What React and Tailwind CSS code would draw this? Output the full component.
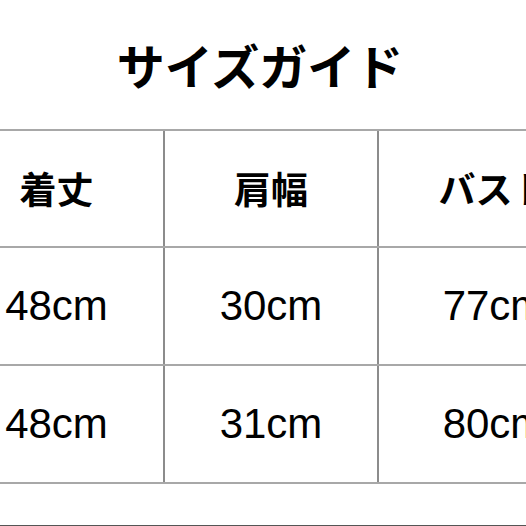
import React from "react";

const headers = ["着丈", "肩幅", "バスト"];
const rows = [
    ["48cm", "30cm", "77cm"],
    ["48cm", "31cm", "80cm"],
];
const colWidths = ["w-[215px]", "w-[214px]", "w-[230px]"];

const jp = { fontFamily: '"Noto Sans CJK JP", "Noto Sans", sans-serif' };
const num = { fontFamily: '"Liberation Sans", Arial, sans-serif' };

const Cell = ({ children, index, header }) => (
    <div
        className={`${colWidths[index]} shrink-0 flex items-center justify-center ${index < 2 ? "border-r-2 border-[#8c8c8c]" : ""}`}
    >
        {header ? (
            <span className="text-[37px] font-bold text-black leading-none" style={jp}>{children}</span>
        ) : (
            <span className="text-[42px] text-black leading-none" style={num}>{children}</span>
        )}
    </div>
);

const App = () => {
    return (
        <div className="w-[526px] h-[526px] bg-white overflow-hidden flex flex-col relative">
            <div className="h-[129px] shrink-0 flex items-center justify-center pt-[2px] pb-[4px] pr-[6px]">
                <h1 className="text-[48px] font-bold text-black leading-none" style={jp}>サイズガイド</h1>
            </div>
            <div className="ml-[-50px] flex flex-col">
                <div className="flex h-[119px] border-t-2 border-b-2 border-[#a8a8a8]">
                    {headers.map((h, i) => (
                        <Cell key={h} index={i} header>{h}</Cell>
                    ))}
                </div>
                {rows.map((row, r) => (
                    <div key={r} className="flex h-[118px] border-b-2 border-[#a8a8a8]">
                        {row.map((v, i) => (
                            <Cell key={i} index={i}>{v}</Cell>
                        ))}
                    </div>
                ))}
            </div>
            <div className="flex-1" />
            <div className="h-px bg-[#555555]" />
        </div>
    );
};

export default App;
